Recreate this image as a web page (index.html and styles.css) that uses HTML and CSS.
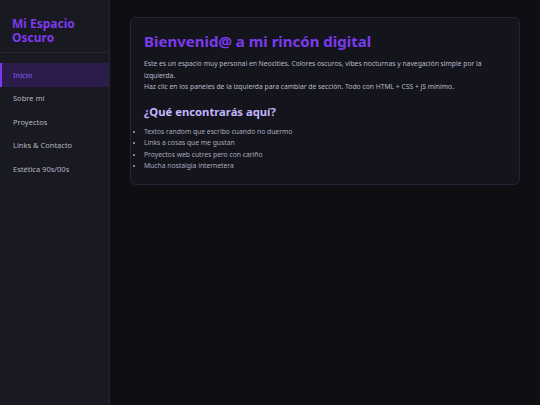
FILE: index.html
```html
<!DOCTYPE html>
<html lang="es">
<head>
<meta charset="utf-8">
<title>Mi Espacio Oscuro</title>
<link rel="stylesheet" href="styles.css">
</head>
<body>
<div class="layout">
  <aside class="sidebar">
    <div class="brand">Mi Espacio Oscuro</div>
    <nav class="nav">
      <a class="nav-item active">Inicio</a>
      <a class="nav-item">Sobre mí</a>
      <a class="nav-item">Proyectos</a>
      <a class="nav-item">Links &amp; Contacto</a>
      <a class="nav-item">Estética 90s/00s</a>
    </nav>
  </aside>
  <main class="main">
    <section class="card">
      <h1 class="title">Bienvenid@ a mi rincón digital</h1>
      <p class="text">Este es un espacio muy personal en Neocities. Colores oscuros, vibes nocturnas y navegación simple por la izquierda.<br>Haz clic en los paneles de la izquierda para cambiar de sección. Todo con HTML + CSS + JS mínimo.</p>
      <h2 class="subtitle">¿Qué encontrarás aquí?</h2>
      <ul class="list">
        <li>Textos random que escribo cuando no duermo</li>
        <li>Links a cosas que me gustan</li>
        <li>Proyectos web cutres pero con cariño</li>
        <li>Mucha nostalgia internetera</li>
      </ul>
    </section>
  </main>
</div>
</body>
</html>
```
FILE: styles.css
```css
* { box-sizing: border-box; }
html, body { margin: 0; height: 100%; }
body {
  font-family: "Noto Sans", "DejaVu Sans", sans-serif;
  background: #0f0f13;
  color: #b8b8c8;
}
.layout {
  display: flex;
  min-height: 405px;
}
.sidebar {
  width: 110px;
  flex: 0 0 110px;
  background: #191921;
  border-right: 1px solid #24242e;
}
.brand {
  padding: 17px 12px 7px;
  font-size: 12px;
  line-height: 14px;
  font-weight: 700;
  color: #7c3aed;
  border-bottom: 1px solid #272731;
}
.nav {
  display: flex;
  flex-direction: column;
  padding-top: 10px;
}
.nav-item {
  display: block;
  padding: 6.75px 11px 6.75px 11px;
  font-size: 7.5px;
  line-height: 10px;
  color: #b4b4c4;
  border-left: 2px solid transparent;
}
.nav-item.active {
  background: #2c1c4c;
  border-left-color: #7c3aed;
  color: #8b5cf6;
}
.main {
  flex: 1;
  padding: 17px 20px 20px 20px;
}
.card {
  background: #14141c;
  border: 1px solid #25253a;
  border-radius: 6px;
  padding: 13px 14px 12px 13px;
}
.title {
  margin: 0 0 7px;
  font-size: 15px;
  line-height: 20px;
  font-weight: 700;
  color: #7c3aed;
}
.text {
  margin: 0 0 11px;
  font-size: 6.75px;
  line-height: 11.5px;
  color: #b9b9c9;
}
.subtitle {
  margin: 0 0 6px;
  font-size: 11.25px;
  line-height: 16px;
  font-weight: 700;
  color: #c4b5fd;
}
.list {
  margin: 0;
  padding-left: 0;
  font-size: 6.75px;
  line-height: 11.5px;
  color: #a9a9bd;
}
```
